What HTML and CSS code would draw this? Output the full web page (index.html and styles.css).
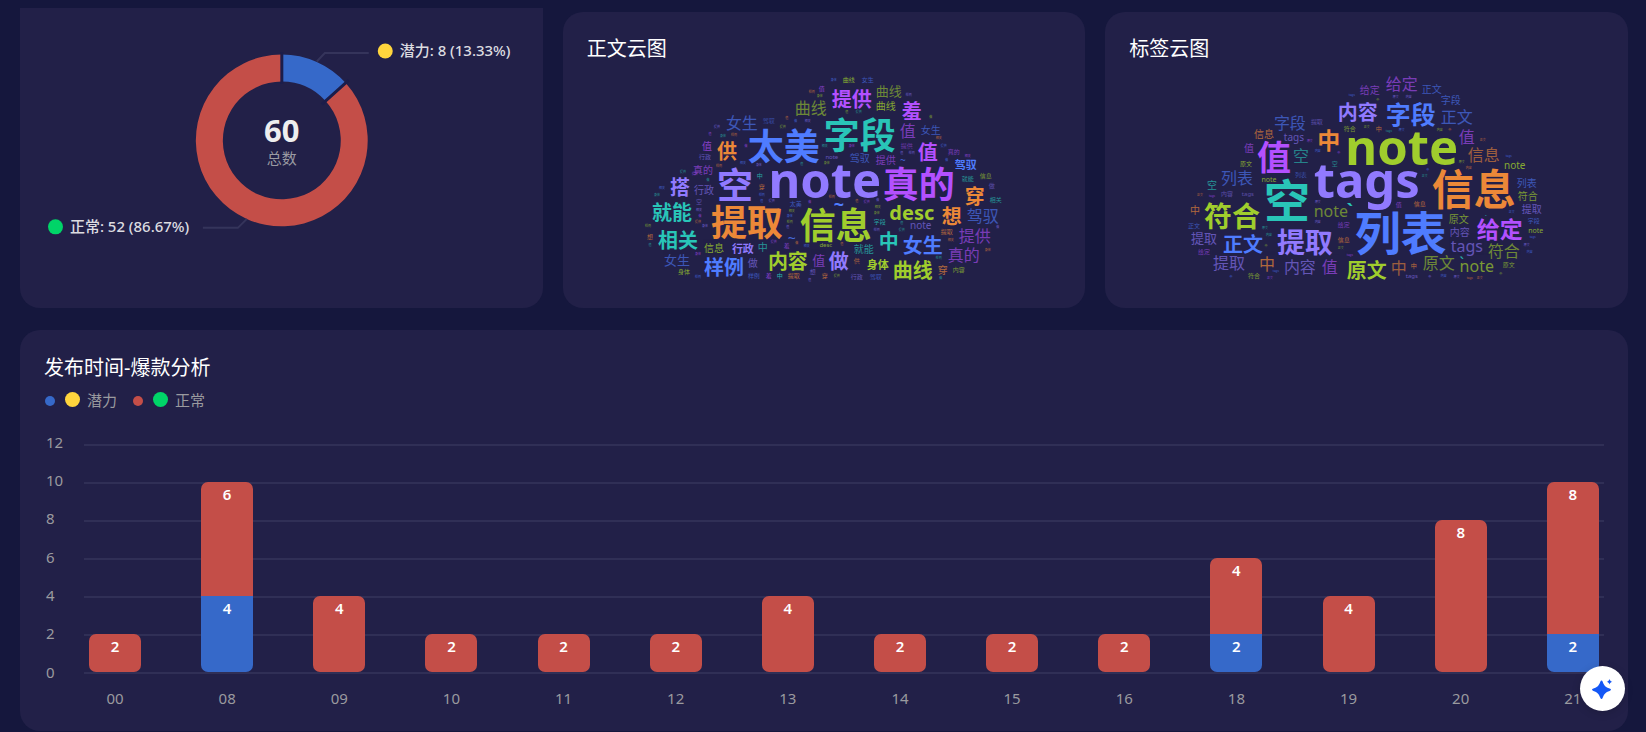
FILE: index.html
```
<!DOCTYPE html>
<html lang="zh-CN">
<head>
<meta charset="utf-8">
<meta name="viewport" content="width=device-width, initial-scale=1">
<title>数据分析</title>
<link rel="stylesheet" href="styles.css">
</head>
<body>
<main class="board">
  <section class="row">
    <article class="card card-donut">
      <svg class="figure" viewBox="20 8 523 300" role="img" aria-label="总数 60">
        <path class="fill-blue" d="M282 54.500A86 86 0 0 1 345.900 83L325.800 101A59 59 0 0 0 282 81.500Z"/>
        <path class="fill-red" d="M345.900 83A86 86 0 1 1 282 54.500V81.500A59 59 0 1 0 325.800 101Z"/>
        <path class="split" d="M282 52V84M322 104.500L349 80.200"/>
        <path class="leader" d="M317 61.500L325 53H369M247 219L238 228H203"/>
        <circle class="fill-yellow" cx="385.500" cy="51" r="7.500"/>
        <text class="slice-label" x="400" y="56">潜力: 8 (13.33%)</text>
        <circle class="fill-green" cx="55.500" cy="227" r="7.500"/>
        <text class="slice-label" x="70" y="232">正常: 52 (86.67%)</text>
        <text class="total" x="282" y="142">60</text>
        <text class="total-label" x="282" y="164">总数</text>
      </svg>
    </article>
    <article class="card card-cloud">
      <h2 class="title">正文云图</h2>
      <svg class="figure" id="cloud-body" viewBox="563 60 523 240" role="img" aria-label="正文云图"></svg>
    </article>
    <article class="card card-cloud">
      <h2 class="title">标签云图</h2>
      <svg class="figure" id="cloud-tags" viewBox="1105 60 523 240" role="img" aria-label="标签云图"></svg>
    </article>
  </section>

  <section class="card card-bars">
    <h2 class="title">发布时间-爆款分析</h2>
    <ul class="legend">
      <li><i class="dot blue"></i><i class="ball yellow"></i>潜力</li>
      <li><i class="dot red"></i><i class="ball green"></i>正常</li>
    </ul>
    <div class="chart">
      <div class="y-axis"><span>12</span><span>10</span><span>8</span><span>6</span><span>4</span><span>2</span><span>0</span></div>
      <div class="plot" id="plot"></div>
      <div class="x-axis" id="x-axis"></div>
    </div>
  </section>
</main>
<button class="assistant" type="button" aria-label="AI 助手">
  <svg viewBox="0 0 24 24" width="24" height="24" aria-hidden="true">
    <path d="M10.500 3.500Q11.200 3.500 11.700 4.800C13.200 8.800 14.500 10.200 18.600 11.600Q20 12.200 20 12.800Q20 13.400 18.600 14C14.500 15.400 13.200 16.800 11.700 20.800Q11.200 22.100 10.500 22.100Q9.800 22.100 9.300 20.800C7.800 16.800 6.500 15.400 2.400 14Q1 13.400 1 12.800Q1 12.200 2.400 11.600C6.500 10.200 7.800 8.800 9.300 4.800Q9.800 3.500 10.500 3.500Z"/>
    <path d="M18.500 2C19 3.700 19.600 4.300 21.300 4.800C19.600 5.300 19 5.900 18.500 7.600C18 5.900 17.400 5.300 15.700 4.800C17.400 4.300 18 3.700 18.500 2Z"/>
  </svg>
</button>
<script src="charts.js"></script>
</body>
</html>
```
FILE: styles.css
```
* { box-sizing: border-box; }
body {
  margin: 0;
  background: #15173d;
  color: #fff;
  font-family: "Noto Sans", "Noto Sans CJK SC", sans-serif;
  font-size: 15px;
}
.board {
  display: flex;
  flex-direction: column;
  gap: 22px;
  padding: 8px 18px 0 20px;
}
.row {
  display: grid;
  grid-template-columns: repeat(3, 1fr);
  gap: 20px;
}
.card { background: #222048; border-radius: 20px; overflow: hidden; }
.card-donut { border-radius: 0 0 20px 20px; }
.card-cloud { margin-top: 4px; padding-top: 23px; }
.card-cloud .title { padding: 0 24px; margin-bottom: -4px; }
.card-bars { padding: 24px 24px 22px; }
.figure { display: block; width: 100%; height: auto; }
.title { margin: 0; font-size: 20px; line-height: 28px; font-weight: 400; }

.fill-blue { fill: #3669c9; }
.fill-red { fill: #c44e48; }
.fill-yellow { fill: #ffd53d; }
.fill-green { fill: #00d468; }
.split { stroke: #1c1d4a; stroke-width: 3; }
.leader { fill: none; stroke: #35345b; stroke-width: 2; }
.slice-label { fill: #dcdce0; font-size: 15px; font-weight: 500; }
.total { fill: #eee; font-size: 31px; font-weight: 700; text-anchor: middle; }
.total-label { fill: #9a9aa2; font-size: 15px; text-anchor: middle; }

.word { text-anchor: middle; }
.c-p { fill: #917aff; }
.c-b { fill: #4f7cff; }
.c-t { fill: #29c5b8; }
.c-g { fill: #a0cd2d; }
.c-o { fill: #ec8838; }
.c-m { fill: #b350ff; }

.legend {
  display: flex;
  gap: 15px;
  margin: 7px 0 0;
  padding: 0;
  list-style: none;
  color: #9a9a9f;
  line-height: 22px;
}
.legend li { display: flex; align-items: center; }
.dot { width: 10px; height: 10px; margin: 2px 10px 0 1px; border-radius: 50%; }
.ball { width: 15px; height: 15px; margin-right: 7px; border-radius: 50%; }
.blue { background: #3669c9; }
.red { background: #c44e48; }
.yellow { background: #ffd53d; }
.green { background: #00d468; }

.chart {
  display: grid;
  grid-template-columns: 40px 1fr;
  grid-template-rows: 230px 22px;
  row-gap: 13px;
  margin-top: 33px;
  color: #9a9a9f;
}
.y-axis {
  display: flex;
  flex-direction: column;
  justify-content: space-between;
  margin: -12px 0 -8px;
  padding-left: 2px;
  line-height: 20px;
}
.plot {
  display: flex;
  justify-content: space-between;
  align-items: flex-end;
  padding: 0 5px;
  border-bottom: 2px solid #302f56;
  background: repeating-linear-gradient(to bottom, #302f56 0 2px, transparent 2px 38px);
}
.bar {
  display: flex;
  flex-direction: column;
  width: 52px;
  border-radius: 7px;
  overflow: hidden;
}
.segment {
  padding-top: 2px;
  color: #fff;
  font-weight: 600;
  line-height: 20px;
  text-align: center;
}
.x-axis {
  grid-column: 2;
  display: flex;
  justify-content: space-between;
  padding: 0 5px;
  line-height: 22px;
}
.x-axis span { width: 52px; text-align: center; }

.assistant {
  position: fixed;
  right: 21px;
  bottom: 21px;
  display: grid;
  place-items: center;
  width: 45px;
  height: 45px;
  padding: 0;
  border: 0;
  border-radius: 50%;
  background: #fff;
  box-shadow: 0 2px 8px rgba(0, 0, 0, 0.15);
}
.assistant path { fill: #1457f5; }
```
FILE: charts.js
```
// Each word: text, centre x, centre y, size, colour key, opacity
const bodyWords = [
  ["note",825,180,49,"p",1],["太美",784,147,36,"b",1],["字段",860,136,36,"t",1],["空",735,186,36,"p",1],
  ["真的",919,185,36,"m",1],["提取",747,223,36,"o",1],["信息",836,226,36,"g",1],
  ["提供",852,100,20,"m",1],["羞",912,112,20,"m",1],["供",727,152,20,"o",1],["值",928,153,20,"m",1],
  ["穿",975,197,20,"o",1],["desc",912,213,20,"g",1],["想",952,217,20,"o",1],["中",889,242,20,"t",1],
  ["女生",923,246,20,"b",1],["做",839,262,20,"p",1],["曲线",913,271,20,"g",1],["搭",680,188,20,"p",1],
  ["就能",672,213,20,"t",1],["相关",678,241,20,"t",1],["样例",724,268,20,"b",1],["内容",788,262,20,"g",1],
  ["~",839,205,18,"b",1],["驾驭",966,166,11,"b",1],["身体",878,266,11,"g",1],["行政",743,250,11,"p",1],
  ["曲线",811,109,16,"g",.6],["女生",742,124,16,"b",.6],["值",908,132,16,"m",.6],["驾驭",983,217,16,"b",.6],
  ["提供",975,237,16,"m",.6],["真的",964,256,16,"m",.6],["曲线",889,92,13,"g",.6],["女生",677,261,13,"b",.6],
  ["值",819,261,13,"m",.6],["~",792,239,14,"b",.8],["曲线",886,107,10,"g",.8],["女生",931,131,10,"b",.6],
  ["驾驭",860,159,10,"b",.6],["提供",886,161,10,"m",.6],["~",903,161,10,"b",.7],["值",707,147,10,"m",.7],
  ["真的",703,171,10,"m",.6],["note",921,226,10,"p",.6],["就能",864,250,10,"t",.7],["穿",943,271,10,"o",.7],
  ["行政",704,191,10,"p",.6],["信息",714,249,10,"g",.8],["中",763,248,10,"t",.7],["做",753,264,10,"p",.6],
  ["驾驭",769,122,6,"b",.5],["行政",705,158,6,"p",.6],["值",822,90,6,"m",.7],["中",760,177,6,"t",.8],
  ["曲线",849,81,6,"g",.8],["女生",868,81,6,"b",.6],["提供",907,147,6,"m",.5],["note",832,158,6,"p",.6],
  ["真的",954,153,6,"m",.6],["就能",968,180,6,"t",.7],["信息",986,177,6,"g",.7],["做",992,187,6,"p",.5],
  ["相关",996,201,6,"t",.7],["字段",880,223,6,"t",.8],["提取",947,233,6,"o",.7],["desc",826,246,6,"g",.8],
  ["供",857,262,6,"o",.6],["内容",959,271,6,"g",.7],["穿",825,277,6,"o",.7],["行政",857,278,6,"p",.6],
  ["驾驭",876,278,6,"b",.6],["空",699,203,6,"p",.5],["穿",762,188,6,"o",.7],["太美",796,205,6,"b",.6],
  ["身体",684,273,6,"g",.8],["样例",754,277,6,"b",.6],["羞",769,277,6,"m",.8],["中",780,277,6,"t",.9],
  ["提取",794,277,6,"o",.7],["想",813,273,6,"p",.6],["羞",787,247,6,"m",.7],["想",650,238,6,"o",.7]
];
const tagWords = [
  ["note",1402,147,49,"g",1],["tags",1367,180,49,"p",1],["列表",1401,234,46,"b",1],["空",1287,202,46,"t",1],
  ["信息",1474,190,42,"o",1],["值",1274,158,34,"m",1],["符合",1232,217,28,"g",1],["提取",1305,243,28,"p",1],
  ["字段",1411,115,25,"b",1],["中",1329,141,23,"o",1],["给定",1500,230,23,"m",1],["内容",1358,113,20,"p",1],
  ["正文",1243,245,20,"b",1],["原文",1367,271,20,"g",1],["`",1350,211,18,"t",1],["`",1462,264,16,"t",.9],
  ["字段",1290,124,16,"b",.6],["空",1301,157,16,"t",.6],["列表",1237,179,16,"b",.6],["给定",1402,85,16,"m",.6],
  ["正文",1457,118,16,"b",.6],["值",1467,138,16,"m",.6],["信息",1484,156,16,"o",.6],["tags",1467,247,16,"p",.6],
  ["符合",1504,252,16,"g",.6],["原文",1439,264,16,"g",.6],["note",1477,267,16,"g",.7],["中",1399,269,16,"o",.6],
  ["note",1331,212,16,"g",.6],["提取",1229,264,16,"p",.6],["中",1267,265,16,"o",.7],["内容",1300,268,16,"p",.6],
  ["值",1330,268,16,"m",.6],["提取",1204,239,13,"p",.6],["给定",1370,91,10,"m",.6],["信息",1264,135,10,"o",.7],
  ["tags",1294,138,10,"p",.6],["值",1249,149,10,"m",.6],["正文",1432,90,10,"b",.6],["字段",1451,101,10,"b",.6],
  ["note",1515,166,10,"g",.8],["列表",1527,184,10,"b",.6],["符合",1528,197,10,"g",.7],["提取",1532,210,10,"p",.6],
  ["原文",1459,220,10,"g",.7],["内容",1460,233,10,"p",.6],["空",1212,186,10,"t",.7],["中",1195,211,10,"o",.7],
  ["提取",1317,123,6,"p",.5],["符合",1350,130,6,"g",.7],["原文",1246,165,6,"g",.8],["空",1335,165,6,"t",.6],
  ["列表",1301,176,6,"b",.5],["note",1269,180,7,"g",.8],["中",1379,130,6,"o",.7],["字段",1534,222,6,"b",.6],
  ["note",1536,231,7,"g",.8],["信息",1420,205,6,"o",.7],["值",1399,206,6,"m",.6],["`",1486,218,8,"t",.9],
  ["原文",1509,266,6,"g",.7],["中",1414,267,6,"o",.8],["tags",1412,277,6,"p",.6],["内容",1227,195,6,"p",.5],
  ["tags",1248,195,6,"p",.5],["正文",1194,227,6,"b",.6],["给定",1204,253,6,"m",.6],["给定",1344,226,6,"m",.6],
  ["信息",1344,241,6,"o",.7],["符合",1254,277,6,"g",.7]
];

// Filler words: centre x, centre y, colour key
const bodyFiller = [
  [820,97,"g"],[812,93,"o"],[787,119,"o"],[783,128,"g"],[796,122,"b"],[808,122,"p"],[723,137,"t"],[734,136,"o"],
  [710,135,"m"],[717,128,"p"],[746,147,"m"],[743,164,"b"],[759,166,"p"],[719,167,"o"],[802,165,"t"],[683,173,"t"],
  [708,181,"t"],[825,147,"t"],[834,81,"b"],[909,96,"p"],[847,113,"g"],[859,113,"t"],[931,118,"g"],[939,139,"o"],
  [852,147,"m"],[912,154,"p"],[902,154,"p"],[944,147,"b"],[947,161,"b"],[968,157,"m"],[827,164,"g"],[832,198,"o"],
  [857,202,"o"],[867,203,"m"],[878,201,"p"],[878,208,"g"],[877,214,"g"],[877,231,"p"],[902,224,"t"],[902,231,"t"],
  [998,228,"p"],[951,241,"o"],[988,251,"o"],[939,259,"t"],[842,245,"o"],[837,277,"g"],[941,279,"t"],[662,189,"b"],
  [657,196,"t"],[648,227,"g"],[650,246,"t"],[698,223,"o"],[700,217,"m"],[699,211,"p"],[705,227,"p"],[762,196,"b"],
  [762,202,"b"],[772,202,"p"],[810,203,"m"],[792,212,"g"],[790,217,"b"],[790,223,"g"],[788,228,"p"],[774,243,"m"],
  [797,244,"o"],[807,247,"b"],[698,255,"m"],[698,278,"b"],[810,281,"p"],[695,175,"m"]
];
const tagFiller = [
  [1396,98,"p"],[1409,98,"p"],[1378,101,"g"],[1367,128,"g"],[1389,132,"t"],[1402,131,"b"],[1440,131,"g"],[1450,131,"o"],
  [1483,141,"o"],[1509,157,"b"],[1462,163,"g"],[1469,169,"o"],[1428,171,"b"],[1425,177,"t"],[1352,96,"b"],[1310,142,"m"],
  [1318,152,"b"],[1339,154,"m"],[1512,213,"b"],[1533,238,"b"],[1527,246,"p"],[1530,253,"b"],[1501,275,"g"],[1480,279,"o"],
  [1470,279,"o"],[1457,278,"p"],[1444,277,"b"],[1430,278,"p"],[1200,196,"o"],[1212,197,"m"],[1265,229,"t"],[1269,236,"t"],
  [1266,247,"g"],[1341,249,"g"],[1350,256,"m"],[1318,203,"p"],[1318,223,"p"],[1231,278,"b"],[1270,279,"m"],[1276,272,"b"]
];

function drawCloud(id, words, filler, fillerTexts) {
  const svg = document.getElementById(id);
  const small = filler.map(([x, y, c], i) => [fillerTexts[i % fillerTexts.length], x, y, 3, c, 0.7]);
  for (const [text, x, y, size, color, opacity] of words.concat(small)) {
    const el = document.createElementNS("http://www.w3.org/2000/svg", "text");
    el.setAttribute("class", "word c-" + color);
    el.setAttribute("x", x);
    el.setAttribute("y", Math.round(y + size * 0.38));
    el.setAttribute("font-size", size);
    el.setAttribute("font-weight", opacity === 1 ? 700 : 400);
    el.setAttribute("opacity", opacity);
    el.textContent = text;
    svg.appendChild(el);
  }
}
drawCloud("cloud-body", bodyWords, bodyFiller, ["身体", "样例", "值", "提供", "做", "相关"]);
drawCloud("cloud-tags", tagWords, tagFiller, ["原文", "内容", "中", "正文", "tags"]);

// Hour, potential count, normal count
const hours = [
  ["00",0,2],["08",4,6],["09",0,4],["10",0,2],["11",0,2],["12",0,2],["13",0,4],
  ["14",0,2],["15",0,2],["16",0,2],["18",2,4],["19",0,4],["20",0,8],["21",2,8]
];
const axisMax = 12;
const plot = document.getElementById("plot");
const axis = document.getElementById("x-axis");
for (const [hour, potential, normal] of hours) {
  const total = potential + normal;
  const bar = document.createElement("div");
  bar.className = "bar";
  bar.style.height = (total / axisMax * 100) + "%";
  for (const [value, color] of [[normal, "red"], [potential, "blue"]]) {
    if (!value) continue;
    const segment = document.createElement("div");
    segment.className = "segment " + color;
    segment.style.height = (value / total * 100) + "%";
    segment.textContent = value;
    bar.appendChild(segment);
  }
  plot.appendChild(bar);
  const label = document.createElement("span");
  label.textContent = hour;
  axis.appendChild(label);
}
```
